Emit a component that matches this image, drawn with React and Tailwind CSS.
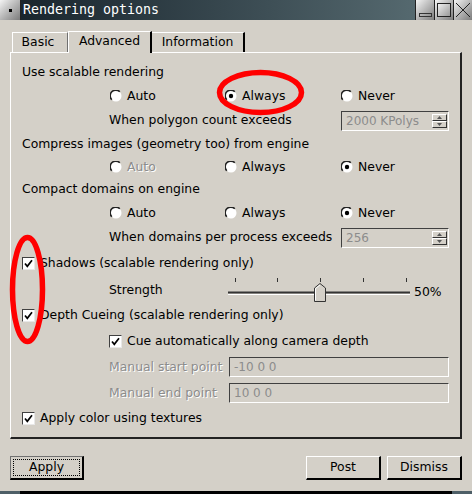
import React from 'react';

const BG = 'bg-[#d4d0c8]';

const Radio = ({ checked }) => (
  <svg width="12" height="12" viewBox="0 0 12 12" className="shrink-0">
    <circle cx="6" cy="6" r="5.5" fill="white" />
    <path d="M1.8 9.8 A5.2 5.2 0 0 1 9.8 1.8" stroke="#222" strokeWidth="1.6" fill="none" />
    {checked && <circle cx="6" cy="6" r="2.2" fill="black" />}
  </svg>
);

const Check = () => (
  <div className="w-[13px] h-[13px] shrink-0 bg-white border border-t-[#404040] border-l-[#404040] border-r-[#e8e8e8] border-b-[#e8e8e8] flex items-center justify-center">
    <svg width="11" height="11" viewBox="0 0 11 11">
      <path d="M2 5.5 L4.3 8.3 L9 2.2" stroke="black" strokeWidth="1.7" fill="none" />
    </svg>
  </div>
);

const RadioCell = ({ label, checked, disabled, width }) => (
  <div className={`flex items-center gap-[5px] ${width}`}>
    <Radio checked={checked} />
    <span className={disabled ? 'text-[#8c8c8c] [text-shadow:1px_1px_0_#fff]' : ''}>{label}</span>
  </div>
);

const RadioRow = ({ h, options }) => (
  <div className={`flex items-center pl-[99px] ${h}`}>
    <RadioCell width="w-[115px]" {...options[0]} />
    <RadioCell width="w-[116px]" {...options[1]} />
    <RadioCell width="w-[100px]" {...options[2]} />
  </div>
);

const Spin = ({ value }) => (
  <div className="w-[108px] h-[20px] flex items-center border border-t-[#404040] border-l-[#404040] border-r-white border-b-white pl-[4px] text-[#8c8c8c] text-[12px]">
    <span className="flex-1 overflow-hidden whitespace-nowrap">{value}</span>
    <div className="flex flex-col w-[15px] mr-[1px] shrink-0">
      <div className="h-[7px] border border-t-white border-l-white border-r-[#333] border-b-[#333] flex items-center justify-center">
        <svg width="5" height="3" viewBox="0 0 5 3"><path d="M0 3 L2.5 0 L5 3Z" fill="#555" /></svg>
      </div>
      <div className="h-[7px] border border-t-white border-l-white border-r-[#333] border-b-[#333] flex items-center justify-center">
        <svg width="5" height="3" viewBox="0 0 5 3"><path d="M0 0 L2.5 3 L5 0Z" fill="#555" /></svg>
      </div>
    </div>
  </div>
);

const Field = ({ value }) => (
  <div className="w-[220px] h-[20px] flex items-center border border-t-[#404040] border-l-[#404040] border-r-white border-b-white pl-[4px] text-[#8c8c8c] text-[12px]">
    {value}
  </div>
);

const Slider = () => (
  <svg width="186" height="26" viewBox="0 0 186 26" className="shrink-0">
    {[7, 49, 92, 135, 178].map((x) => (
      <line key={x} x1={x + 0.5} y1="2" x2={x + 0.5} y2="6" stroke="#333" />
    ))}
    <line x1="0" y1="16.5" x2="182" y2="16.5" stroke="#333" strokeWidth="2" />
    <line x1="0" y1="18.5" x2="182" y2="18.5" stroke="#fff" />
    <path d="M86.5 12 L92 7.5 L97.5 12 L97.5 25.5 L86.5 25.5 Z" fill="#d4d0c8" stroke="#333" />
    <path d="M87.5 12.5 L92 9 M87.5 12.5 L87.5 24.5" stroke="#fff" />
  </svg>
);

const TitleButton = ({ children }) => (
  <div className="w-[19px] h-[20px] border-l border-[#222] bg-linear-to-br from-[#f4f4f4] to-[#7c7c7c] flex items-center justify-center">
    {children}
  </div>
);

const Ellipse = ({ className, rx, ry, w, h }) => (
  <svg className={`absolute pointer-events-none ${className}`} width={w} height={h} viewBox={`0 0 ${w} ${h}`}>
    <ellipse cx={w / 2} cy={h / 2} rx={rx} ry={ry} fill="none" stroke="#ff0000" strokeWidth="5.5" />
  </svg>
);

export default function App() {
  return (
    <div className={`relative w-[472px] h-[494px] overflow-hidden ${BG} text-[12.4px] text-black font-['DejaVu_Sans','Liberation_Sans',sans-serif]`}>
      {/* window title */}
      <div className="flex h-[20px]">
        <div className="w-[21px] h-full bg-linear-to-br from-[#f4f4f4] to-[#7c7c7c] border-r border-[#222] flex items-center justify-center">
          <div className="w-[3px] h-[3px] bg-black" />
        </div>
        <div className="flex-1 bg-linear-to-r from-[#1a262e] to-[#55696f] text-white text-[13.3px] font-['DejaVu_Sans_Mono',monospace] pl-[2px] flex items-center">
          Rendering options
        </div>
        <TitleButton>
          <div className="w-[13px] h-[4px] border border-[#333] mt-[10px]" />
        </TitleButton>
        <TitleButton>
          <div className="w-[14px] h-[14px] border border-[#222] bg-linear-to-br from-[#f0f0f0] to-[#9a9a9a]" />
        </TitleButton>
        <TitleButton>
          <svg width="16" height="16" viewBox="0 0 16 16">
            <path d="M1 1 L15 15 M15 1 L1 15" stroke="#222" strokeWidth="1" />
          </svg>
        </TitleButton>
      </div>

      {/* tabs */}
      <div className="flex items-end h-[32px] pl-[12px]">
        <div className="h-[20px] w-[56px] border-t border-l border-white border-r border-r-[#707070] flex items-center justify-center">
          <span className="mr-[4px]">Basic</span>
        </div>
        <div className={`relative z-10 -mb-px h-[22px] w-[84px] ${BG} border-t border-l border-white border-r-2 border-r-black flex items-center justify-center pb-[2px]`}>
          Advanced
        </div>
        <div className="h-[20px] w-[93px] border-t border-white border-r-2 border-r-black flex items-center justify-center">
          Information
        </div>
      </div>

      {/* panel */}
      <div className="mx-[10px] w-[452px] h-[387px] border-t border-l border-white border-r-2 border-b-2 border-r-[#222] border-b-[#222] pt-[7px]">
        <div className="h-[24px] flex items-center pl-[11px]">Use scalable rendering</div>
        <RadioRow
          h="h-[24px]"
          options={[{ label: 'Auto' }, { label: 'Always', checked: true }, { label: 'Never' }]}
        />
        <div className="h-[25px] flex items-center pl-[98px]">
          <span className="w-[232px]">When polygon count exceeds</span>
          <Spin value="2000 KPolys" />
        </div>
        <div className="h-[23px] flex items-center pl-[11px]">Compress images (geometry too) from engine</div>
        <RadioRow
          h="h-[22px]"
          options={[{ label: 'Auto', disabled: true }, { label: 'Always' }, { label: 'Never', checked: true }]}
        />
        <div className="h-[23px] flex items-center pl-[11px]">Compact domains on engine</div>
        <RadioRow
          h="h-[24px]"
          options={[{ label: 'Auto' }, { label: 'Always' }, { label: 'Never', checked: true }]}
        />
        <div className="h-[25px] flex items-center pl-[98px]">
          <span className="w-[232px]">When domains per process exceeds</span>
          <Spin value="256" />
        </div>
        <div className="h-[26px] flex items-center pl-[11px] gap-[5px]">
          <Check />
          <span>Shadows (scalable rendering only)</span>
        </div>
        <div className="h-[26px] flex items-center pl-[98px]">
          <span className="w-[119px] mt-[2px]">Strength</span>
          <Slider />
          <span className="mt-[6px]">50%</span>
        </div>
        <div className="h-[26px] flex items-center pl-[11px] gap-[5px]">
          <Check />
          <span>Depth Cueing (scalable rendering only)</span>
        </div>
        <div className="h-[26px] flex items-center pl-[98px] gap-[5px]">
          <Check />
          <span>Cue automatically along camera depth</span>
        </div>
        <div className="h-[26px] flex items-center pl-[98px]">
          <span className="w-[120px] text-[#8c8c8c] [text-shadow:1px_1px_0_#fff]">Manual start point</span>
          <Field value="-10 0 0" />
        </div>
        <div className="h-[26px] flex items-center pl-[98px]">
          <span className="w-[120px] text-[#8c8c8c] [text-shadow:1px_1px_0_#fff]">Manual end point</span>
          <Field value="10 0 0" />
        </div>
        <div className="h-[24px] flex items-center pl-[11px] gap-[5px]">
          <Check />
          <span>Apply color using textures</span>
        </div>
      </div>

      {/* buttons */}
      <div className="flex mt-[17px] h-[24px] px-[10px]">
        <div className="w-[74px] h-full border border-t-[#707070] border-l-[#707070] border-r-2 border-b-2 border-r-black border-b-black p-[2px]">
          <div className="w-full h-full border border-dotted border-black flex items-center justify-center">Apply</div>
        </div>
        <div className="flex-1" />
        <div className="w-[75px] h-full border-t border-l border-white border-r-2 border-b-2 border-r-black border-b-black flex items-center justify-center">
          Post
        </div>
        <div className="w-[6px]" />
        <div className="w-[75px] h-full border-t border-l border-white border-r-2 border-b-2 border-r-black border-b-black flex items-center justify-center">
          Dismiss
        </div>
      </div>

      {/* window bottom edge */}
      <div className="flex mt-[11px] h-[3px]">
        <div className="w-[20px] bg-[#4e5f67]" />
        <div className="flex-1 bg-black" />
        <div className="w-[20px] bg-[#4e5f67]" />
      </div>

      {/* red annotation marks */}
      <Ellipse className="left-[216px] top-[69px]" w={89} h={47} rx={41} ry={20} />
      <Ellipse className="left-[9px] top-[234px]" w={37} h={111} rx={15} ry={52} />
    </div>
  );
}
